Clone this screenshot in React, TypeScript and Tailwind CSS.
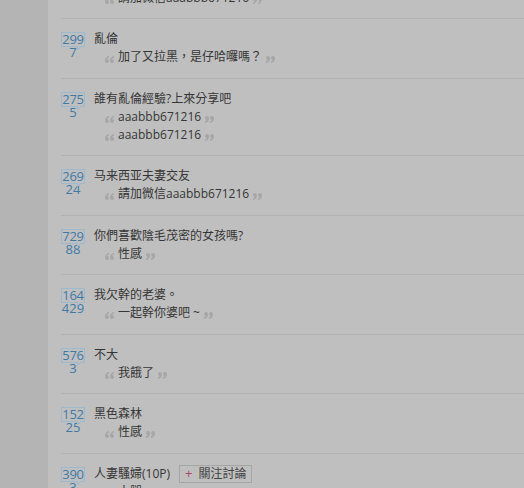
import { Fragment } from 'react'

interface Topic {
  views: string
  replies: string
  title: string
  lines: string[]
  follow?: boolean
}

const topics: Topic[] = [
  { views: '299', replies: '7', title: '亂倫', lines: ['加了又拉黑，是仔哈囉嗎？'] },
  { views: '275', replies: '5', title: '誰有亂倫經驗?上來分享吧', lines: ['aaabbb671216', 'aaabbb671216'] },
  { views: '269', replies: '24', title: '马来西亚夫妻交友', lines: ['請加微信aaabbb671216'] },
  { views: '729', replies: '88', title: '你們喜歡陰毛茂密的女孩嗎?', lines: ['性感'] },
  { views: '164', replies: '429', title: '我欠幹的老婆。', lines: ['一起幹你婆吧 ~'] },
  { views: '576', replies: '3', title: '不大', lines: ['我餓了'] },
  { views: '152', replies: '25', title: '黑色森林', lines: ['性感'] },
  { views: '390', replies: '3', title: '人妻騷婦(10P)', lines: ['大腿'], follow: true }
]

// "66" / "99" style quote marks drawn next to each reply
function QuoteMark({ close }: { close?: boolean }) {
  return (
    <svg
      width="10"
      height="7"
      viewBox="0 0 10 7"
      className={`mb-[3px] shrink-0 ${close ? 'rotate-180' : ''}`}
      aria-hidden="true"
    >
      {[0, 5].map((x) => (
        <Fragment key={x}>
          <circle cx={x + 2} cy={5} r={1.9} fill="#a6a6a6" />
          <path d={`M${x + 0.7} 4.6 Q${x + 0.9} 1.5 ${x + 4} 0.6`} stroke="#a6a6a6" strokeWidth="1.4" fill="none" />
        </Fragment>
      ))}
    </svg>
  )
}

function ReplyLine({ text }: { text: string }) {
  return (
    <div className="ml-[11px] flex h-[18px] items-end gap-[3px]">
      <QuoteMark />
      <span className="leading-[18px]">{text}</span>
      <QuoteMark close />
    </div>
  )
}

function Counter({ views, replies }: { views: string; replies: string }) {
  return (
    <div className="flex w-[33px] shrink-0 flex-col items-start pt-[2px]">
      <div className="relative flex w-[24px] flex-col items-center">
        <span className="block w-[24px] border border-[#9db9cd] text-center text-[13px] leading-[13px] tracking-[-0.3px] text-[#3f7aa6]">
          {views}
        </span>
        <svg width="6" height="4" viewBox="0 0 6 4" className="absolute right-[2px] top-[14px]" aria-hidden="true">
          <path d="M0.5 0 L0.5 3.5 L4.5 0" fill="#bfbfbf" stroke="#9db9cd" strokeWidth="1" />
        </svg>
        <span className="-mt-[1px] text-[13px] leading-[13px] text-[#3f7aa6]">{replies}</span>
      </div>
    </div>
  )
}

export default function App() {
  return (
    <div
      className="flex h-[488px] w-[524px] overflow-hidden bg-[#bfbfbf] text-[12px] text-[#363636]"
      style={{ fontFamily: '"Open Sans", "Noto Sans CJK TC", sans-serif' }}
    >
      {/* left rail */}
      <div className="w-[48px] shrink-0 bg-[#b4b4b4]" />

      <div className="flex-1 pl-[13px]">
        {/* partial row above the fold */}
        <div className="-mt-[11px] pb-[11px] pl-[33px]">
          <ReplyLine text="請加微信aaabbb671216" />
        </div>

        {topics.map((t) => (
          <div key={t.views + t.title} className="flex border-t border-[#b1b1b1] pt-[11px] pb-[11.5px]">
            <Counter views={t.views} replies={t.replies} />
            <div className="flex flex-col">
              <div className="flex h-[18px] items-center">
                <span className="leading-[18px]">{t.title}</span>
                {t.follow && (
                  <span className="ml-[9px] flex h-[18px] items-center gap-[6px] border border-[#a6a6a6] px-[5px] text-[#444]">
                    <span className="text-[13px] text-[#b04566]">+</span>
                    <span>關注討論</span>
                  </span>
                )}
              </div>
              {t.lines.map((l, i) => (
                <ReplyLine key={i} text={l} />
              ))}
            </div>
          </div>
        ))}
      </div>
    </div>
  )
}
